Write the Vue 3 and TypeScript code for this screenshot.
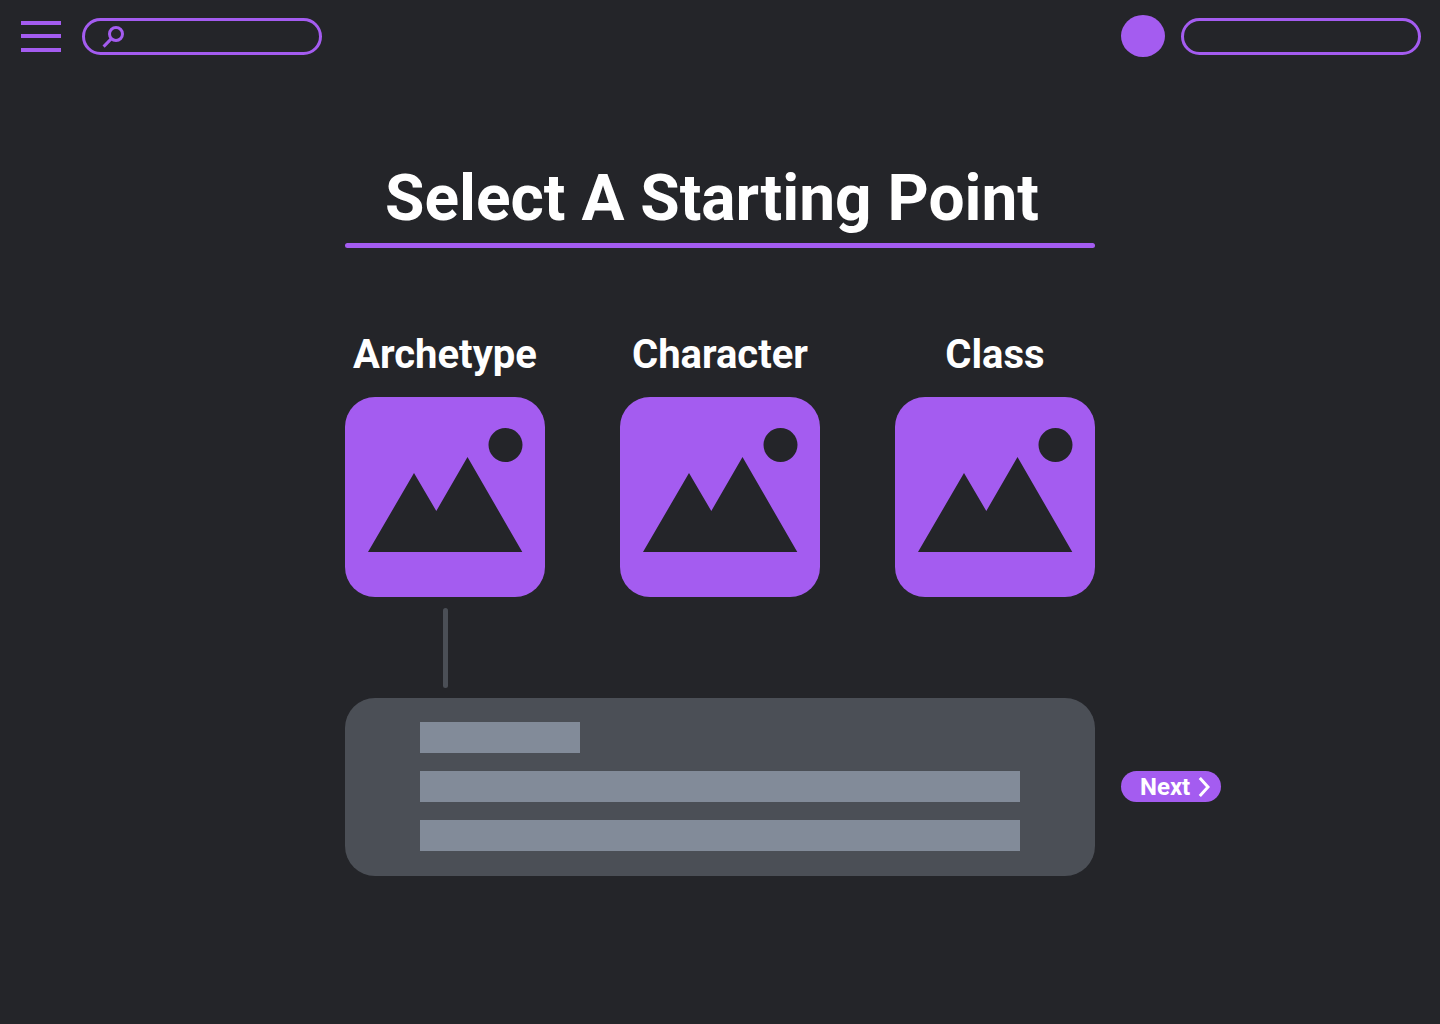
<script setup lang="ts">
import { ref } from 'vue'

interface StartingPoint {
  id: string
  label: string
}

const startingPoints: StartingPoint[] = [
  { id: 'archetype', label: 'Archetype' },
  { id: 'character', label: 'Character' },
  { id: 'class', label: 'Class' },
]

const selected = ref<number>(0)
const query = ref<string>('')
</script>

<template>
  <div class="page">
    <header class="topbar">
      <button class="menu" type="button" aria-label="Menu">
        <svg width="40" height="31" viewBox="0 0 40 31" aria-hidden="true">
          <path d="M0 0h40v4H0zM0 13h40v4H0zM0 27h40v4H0z" fill="currentColor" />
        </svg>
      </button>
      <label class="pill search">
        <svg width="23" height="23" viewBox="0 0 23 23" aria-hidden="true">
          <g fill="none" stroke="currentColor" stroke-width="3">
            <circle cx="14" cy="9" r="6.5" />
            <path d="M9.4 13.6 1.6 21.6" />
          </g>
        </svg>
        <input v-model="query" type="search" aria-label="Search" />
      </label>
      <div class="account">
        <button class="avatar" type="button" aria-label="Profile"></button>
        <button class="pill" type="button" aria-label="Account"></button>
      </div>
    </header>

    <main class="content">
      <h1 class="title">Select A Starting Point</h1>
      <hr class="rule" />

      <ul class="choices">
        <li v-for="(point, index) in startingPoints" :key="point.id" class="choice">
          <h2 :id="point.id" class="label">{{ point.label }}</h2>
          <button
            class="card"
            type="button"
            :aria-labelledby="point.id"
            :aria-pressed="selected === index"
            @click="selected = index"
          >
            <svg viewBox="0 0 200 200" aria-hidden="true">
              <circle cx="160.5" cy="48" r="17" />
              <path d="M23 155 69 76l22.3 38L122.5 60 177.3 155z" />
            </svg>
          </button>
          <span class="connector" :class="{ active: selected === index }"></span>
        </li>
      </ul>

      <section class="details" aria-label="Details">
        <div class="line short"></div>
        <div class="line"></div>
        <div class="line"></div>
      </section>
      <button class="next" type="button">
        Next
        <svg width="12" height="20" viewBox="0 0 12 20" aria-hidden="true">
          <path d="M1.8 1 10 10l-8.2 9" fill="none" stroke="currentColor" stroke-width="3" />
        </svg>
      </button>
    </main>
  </div>
</template>

<style>
body {
  background: #242529;
}
</style>

<style scoped>
.page {
  --bg: #242529;
  --accent: #a45cf0;
  --panel: #4b4f56;
  --line: #828b99;
  min-height: 100vh;
  box-sizing: border-box;
  background: var(--bg);
  color: #fff;
  font-family: Roboto, sans-serif;
}

button {
  border: 0;
  padding: 0;
  background: none;
  color: inherit;
  font: inherit;
  cursor: pointer;
}

svg {
  display: block;
}

.topbar {
  display: flex;
  align-items: center;
  padding: 15px 19px 0 21px;
  min-height: 43px;
}

.menu {
  color: var(--accent);
  margin-right: 21px;
}

.pill {
  box-sizing: border-box;
  width: 240px;
  height: 37px;
  border: 3px solid var(--accent);
  border-radius: 19px;
}

.search {
  display: flex;
  align-items: center;
  gap: 8px;
  padding: 0 17px;
  color: var(--accent);
}

.search svg {
  flex: none;
}

.search input {
  flex: 1;
  min-width: 0;
  padding: 0;
  border: 0;
  outline: 0;
  background: transparent;
  color: #fff;
  font: 16px Roboto, sans-serif;
}

.account {
  display: flex;
  align-items: center;
  gap: 16px;
  height: 43px;
  margin-left: auto;
}

.avatar {
  align-self: flex-start;
  width: 44px;
  height: 42px;
  border-radius: 50%;
  background: var(--accent);
}

.content {
  display: grid;
  grid-template-columns: 1fr minmax(0, 750px) 1fr;
  align-items: start;
  padding: 103px 0 64px;
}

.content > * {
  grid-column: 2;
}

.title {
  margin: 0;
  padding: 0 16px 6px 0;
  font-size: 64px;
  line-height: 76px;
  font-weight: 700;
  text-align: center;
}

.rule {
  width: 100%;
  height: 5px;
  margin: 0;
  border: 0;
  border-radius: 3px;
  background: var(--accent);
}

.choices {
  display: flex;
  justify-content: space-between;
  margin: 83px 0 10px;
  padding: 0;
  list-style: none;
}

.choice {
  display: flex;
  flex-direction: column;
  align-items: center;
  width: 200px;
}

.label {
  margin: 0 0 18px;
  font-size: 40px;
  line-height: 48px;
  font-weight: 700;
}

.card {
  width: 100%;
  border-radius: 30px;
  background: var(--accent);
}

.card svg {
  fill: var(--bg);
}

.connector {
  width: 5px;
  height: 80px;
  margin-top: 11px;
  border-radius: 3px;
}

.connector.active {
  background: var(--panel);
}

.details {
  display: flex;
  flex-direction: column;
  gap: 18px;
  padding: 24px 75px 25px;
  border-radius: 30px;
  background: var(--panel);
}

.line {
  height: 31px;
  background: var(--line);
}

.line.short {
  width: 160px;
}

/* Lines up with the middle row of the details panel. */
.content > .next {
  display: flex;
  align-items: center;
  gap: 8px;
  grid-column: 3;
  width: 100px;
  height: 31px;
  margin: 73px 0 0 26px;
  padding-left: 19px;
  border-radius: 16px;
  background: var(--accent);
  font-size: 24px;
  line-height: 28px;
  font-weight: 700;
}
</style>
